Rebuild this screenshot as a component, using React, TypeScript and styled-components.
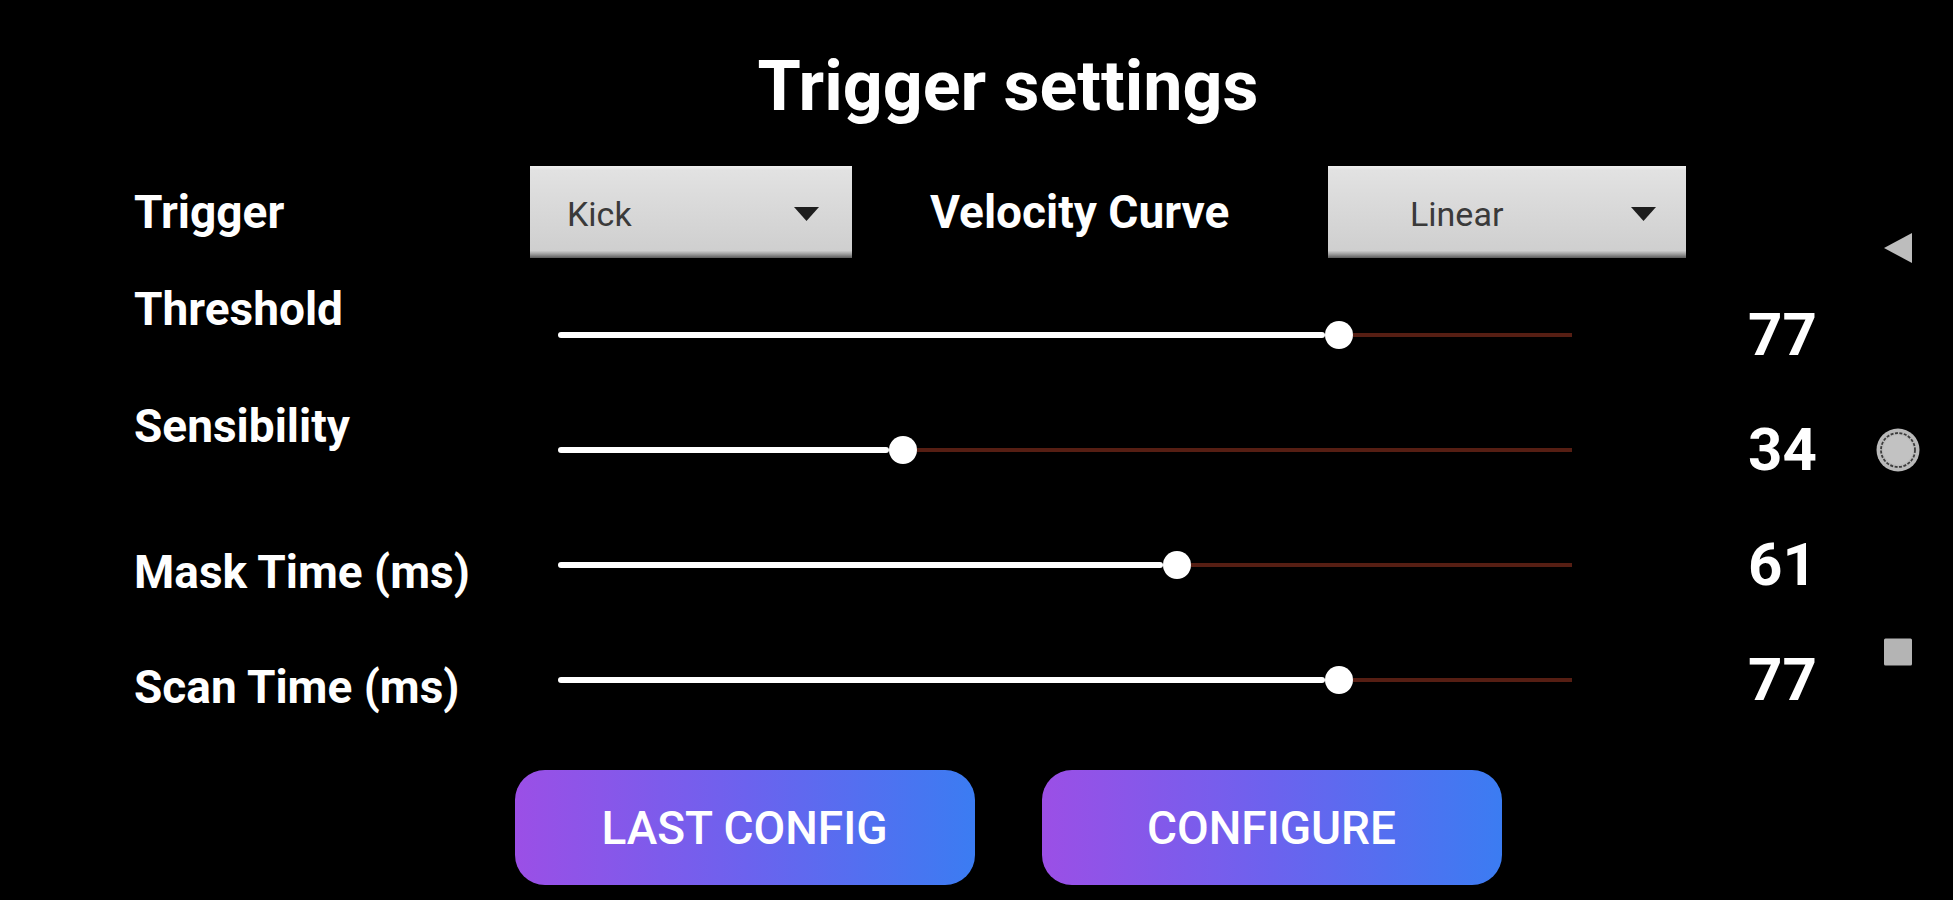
import React from "react";
import styled, { createGlobalStyle } from "styled-components";

const GlobalStyle = createGlobalStyle`
  html, body {
    margin: 0;
    padding: 0;
    background: #000;
  }
  body {
    font-family: Roboto, "Noto Sans", "Liberation Sans", sans-serif;
    color: #fff;
  }
  #root {
    min-height: 900px;
  }
`;

const Screen = styled.div`
  display: flex;
  width: 1953px;
  height: 900px;
  background: #000;
  overflow: hidden;
`;

const Main = styled.main`
  flex: 1;
  display: flex;
  flex-direction: column;
  padding: 50px 0 0 0;
`;

const Title = styled.h1`
  margin: 0;
  padding-left: 173px;
  font-family: Roboto, sans-serif;
  font-weight: 700;
  font-size: 70px;
  line-height: 72px;
  text-align: center;
  color: #fff;
`;

const TopRow = styled.div`
  display: flex;
  align-items: center;
  height: 92px;
  margin-top: 44px;
  padding-left: 134px;
`;

const Label = styled.div<{ $width?: number; $up?: number; $down?: number }>`
  flex: 0 0 ${(p) => (p.$width ? `${p.$width}px` : "auto")};
  font-family: Roboto, sans-serif;
  font-weight: 700;
  font-size: 46px;
  line-height: 46px;
  color: #fff;
  white-space: nowrap;
  margin-bottom: ${(p) => (p.$up ? p.$up * 2 : 0)}px;
  margin-top: ${(p) => (p.$down ? p.$down * 2 : 0)}px;
`;

const Select = styled.div<{ $width: number; $padLeft: number; $padRight: number }>`
  flex: 0 0 ${(p) => p.$width}px;
  height: 92px;
  box-sizing: border-box;
  display: flex;
  align-items: center;
  justify-content: space-between;
  padding: 0 ${(p) => p.$padRight}px 0 ${(p) => p.$padLeft}px;
  background: linear-gradient(
    to bottom,
    #f0f0f0 0px,
    #e2e2e2 4px,
    #dadada 40%,
    #cfcfcf 92%,
    #9a9a9a 96%,
    #5a5a5a 100%
  );
`;

const SelectText = styled.span`
  font-family: Roboto, sans-serif;
  font-weight: 400;
  font-size: 34px;
  line-height: 34px;
  color: #3a3a3a;
  margin-top: 4px;
`;

const Caret = styled.svg`
  width: 25px;
  height: 14px;
  margin-top: 4px;
`;

const Rows = styled.div`
  display: flex;
  flex-direction: column;
  margin-top: 19px;
`;

const Row = styled.div`
  display: grid;
  grid-template-columns: 424px 1014px 1fr;
  align-items: center;
  height: 115px;
  padding-left: 134px;
`;

const Track = styled.div`
  display: flex;
  align-items: center;
  height: 30px;
`;

const ActiveBar = styled.div`
  height: 6px;
  border-radius: 3px;
  background: #fff;
`;

const Thumb = styled.div`
  flex: 0 0 28px;
  height: 28px;
  border-radius: 50%;
  background: #fff;
`;

const InactiveBar = styled.div`
  flex: 1;
  height: 4px;
  background: #561e13;
`;

const Value = styled.div`
  padding-left: 176px;
  font-family: Roboto, sans-serif;
  font-weight: 700;
  font-size: 60px;
  line-height: 60px;
  color: #fff;
`;

const Buttons = styled.div`
  display: flex;
  justify-content: center;
  gap: 67px;
  margin-top: 33px;
  padding-left: 173px;
`;

const GradientButton = styled.button`
  width: 460px;
  height: 115px;
  border: none;
  border-radius: 30px;
  background: linear-gradient(90deg, #9b4fe6 0%, #6c62ee 50%, #3b7cf2 100%);
  color: #fff;
  font-family: Roboto, sans-serif;
  font-weight: 500;
  font-size: 46px;
  line-height: 46px;
  padding: 0;
  cursor: pointer;
`;

const NavBar = styled.nav`
  flex: 0 0 110px;
  display: flex;
  flex-direction: column;
  align-items: center;
  justify-content: center;
`;

const NavSlot = styled.div`
  height: 202px;
  display: flex;
  align-items: center;
  justify-content: center;
`;

type SliderRowProps = {
  label: string;
  value: number;
  up?: number;
  down?: number;
};

function SliderRow({ label, value, up, down }: SliderRowProps) {
  return (
    <Row>
      <Label $up={up} $down={down}>
        {label}
      </Label>
      <Track>
        <ActiveBar style={{ flex: `0 0 calc(${value}% - 14px)` }} />
        <Thumb />
        <InactiveBar />
      </Track>
      <Value>{value}</Value>
    </Row>
  );
}

function CaretIcon() {
  return (
    <Caret viewBox="0 0 25 14">
      <polygon points="0,0 25,0 12.5,14" fill="#1e1e1e" />
    </Caret>
  );
}

export default function App() {
  return (
    <>
      <GlobalStyle />
      <Screen>
        <Main>
          <Title>Trigger settings</Title>
          <TopRow>
            <Label $width={396}>Trigger</Label>
            <Select $width={322} $padLeft={37} $padRight={33}>
              <SelectText>Kick</SelectText>
              <CaretIcon />
            </Select>
            <Label $width={398} style={{ marginLeft: 78 }}>
              Velocity Curve
            </Label>
            <Select $width={358} $padLeft={82} $padRight={30}>
              <SelectText>Linear</SelectText>
              <CaretIcon />
            </Select>
          </TopRow>
          <Rows>
            <SliderRow label="Threshold" value={77} up={26} />
            <SliderRow label="Sensibility" value={34} up={24} />
            <SliderRow label="Mask Time (ms)" value={61} down={7} />
            <SliderRow label="Scan Time (ms)" value={77} down={7} />
          </Rows>
          <Buttons>
            <GradientButton>LAST CONFIG</GradientButton>
            <GradientButton>CONFIGURE</GradientButton>
          </Buttons>
        </Main>
        <NavBar>
          <NavSlot>
            <svg width="30" height="32" viewBox="0 0 30 32">
              <polygon points="29,1 29,31 1,16" fill="#bdbdbd" />
            </svg>
          </NavSlot>
          <NavSlot>
            <svg width="46" height="46" viewBox="0 0 46 46">
              <circle cx="23" cy="23" r="21.5" fill="#b9b9b9" />
              <circle cx="23" cy="23" r="17" fill="none" stroke="#3c3c3c" strokeWidth="1.8" strokeDasharray="3 1.5" />
              <circle cx="23" cy="23" r="15" fill="#c2c2c2" />
            </svg>
          </NavSlot>
          <NavSlot>
            <svg width="30" height="28" viewBox="0 0 30 28">
              <rect x="1" y="0.5" width="28" height="27" rx="1.5" fill="#b4b4b4" />
            </svg>
          </NavSlot>
        </NavBar>
      </Screen>
    </>
  );
}
